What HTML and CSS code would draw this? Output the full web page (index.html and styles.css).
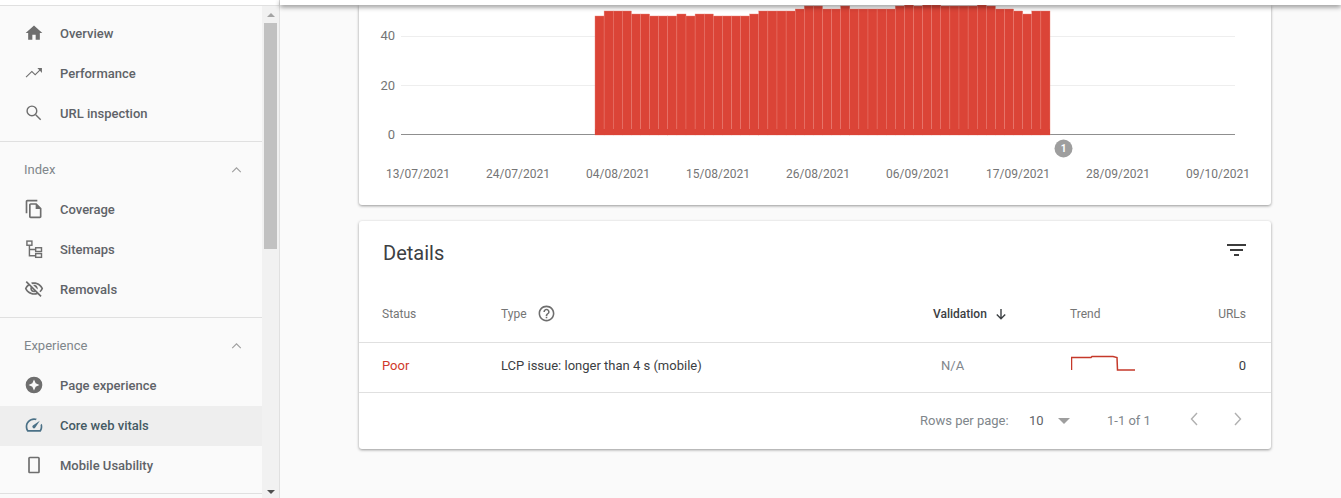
FILE: index.html
```html
<!DOCTYPE html>
<html lang="en">
<head>
    <meta charset="UTF-8">
    <meta name="viewport" content="width=device-width, initial-scale=1.0">
    <title>Core web vitals</title>
    <link rel="stylesheet" href="styles.css">
</head>
<body>
    <aside class="sidebar">
        <div class="sidebar-top"></div>
        <div class="sidebar-body">
            <nav class="nav">
                <div class="nav-group">
                    <a class="nav-item">
                        <svg class="nav-icon" viewBox="0 0 24 24"><path d="M10 20v-6h4v6h5v-8h3L12 3 2 12h3v8z"/></svg>
                        Overview
                    </a>
                    <a class="nav-item">
                        <svg class="nav-icon" viewBox="0 0 24 24"><path d="M16 6l2.29 2.29-4.88 4.88-4-4L2 16.59 2.9 17.5l6.51-6.5 4 4 5.79-5.8L21.5 12V6z"/></svg>
                        Performance
                    </a>
                    <a class="nav-item">
                        <svg class="nav-icon line-icon" viewBox="0 0 24 24"><circle cx="9.5" cy="9.5" r="5.8"/><path d="M14 14l6 6"/></svg>
                        URL inspection
                    </a>
                </div>
                <div class="nav-group">
                    <div class="nav-heading">
                        Index
                        <svg class="nav-chevron" viewBox="0 0 12 7"><path d="M1 6l5-5 5 5"/></svg>
                    </div>
                    <a class="nav-item">
                        <svg class="nav-icon" viewBox="0 0 24 24"><path d="M16 1H4c-1.1 0-2 .9-2 2v14h2V3h12V1zm-1 4H8c-1.1 0-1.99.9-1.99 2L6 21c0 1.1.89 2 1.99 2H19c1.1 0 2-.9 2-2V11l-6-6zM8 21V7h6v5h5v9H8z"/></svg>
                        Coverage
                    </a>
                    <a class="nav-item">
                        <svg class="nav-icon line-icon" viewBox="0 0 24 24"><rect x="3.5" y="2.5" width="6" height="5"/><rect x="14" y="10.5" width="7" height="4.5"/><rect x="14" y="17.5" width="7" height="4.5"/><path d="M6.5 7.5V20H14M6.5 12.5H14"/></svg>
                        Sitemaps
                    </a>
                    <a class="nav-item">
                        <svg class="nav-icon" viewBox="0 0 24 24"><path d="M12 6c3.79 0 7.17 2.13 8.82 5.5-.59 1.22-1.42 2.27-2.41 3.12l1.41 1.41c1.39-1.23 2.49-2.77 3.18-4.53C21.27 7.11 17 4 12 4c-1.27 0-2.49.2-3.64.57l1.65 1.65C10.66 6.09 11.32 6 12 6zm-1.07 1.14L13 9.21c.57.25 1.03.71 1.28 1.28l2.07 2.07c.08-.34.14-.7.14-1.07C16.5 9.01 14.48 7 12 7c-.37 0-.72.05-1.07.14zM2.01 3.87l2.68 2.68C3.06 7.83 1.77 9.53 1 11.5 2.73 15.89 7 19 12 19c1.52 0 2.98-.29 4.32-.82l3.42 3.42 1.41-1.41L3.42 2.45 2.01 3.87zm7.5 7.5l2.61 2.61c-.04.01-.08.02-.12.02-1.38 0-2.5-1.12-2.5-2.5 0-.05.01-.08.01-.13zm-3.4-3.4l1.75 1.75c-.23.55-.36 1.15-.36 1.78 0 2.48 2.02 4.5 4.5 4.5.63 0 1.23-.13 1.77-.36l.98.98c-.88.24-1.8.38-2.75.38-3.79 0-7.17-2.13-8.82-5.5.7-1.43 1.72-2.61 2.93-3.53z"/></svg>
                        Removals
                    </a>
                </div>
                <div class="nav-group">
                    <div class="nav-heading">
                        Experience
                        <svg class="nav-chevron" viewBox="0 0 12 7"><path d="M1 6l5-5 5 5"/></svg>
                    </div>
                    <a class="nav-item">
                        <svg class="nav-icon" viewBox="0 0 24 24"><path fill-rule="evenodd" d="M12 2a10 10 0 1 0 0 20 10 10 0 0 0 0-20zm0 3.5l2 4.5 4.5 2-4.500 2-2 4.500-2-4.500-4.500-2 4.500-2z"/></svg>
                        Page experience
                    </a>
                    <a class="nav-item active">
                        <svg class="nav-icon" viewBox="0 0 24 24"><path d="M12 4C6.500 4 2 8.500 2 14c0 2 .6 3.900 1.600 5.500l.3.5h16.200l.3-.5c1-1.600 1.600-3.500 1.600-5.500 0-1.200-.2-2.400-.6-3.500l-1.600 1.600c.2.600.2 1.200.2 1.900 0 1.400-.4 2.800-1.100 4H5.100C4.400 16.800 4 15.400 4 14c0-4.400 3.600-8 8-8 .7 0 1.300.1 1.900.2l1.600-1.600C14.400 4.200 13.200 4 12 4zM10.600 15.400a2 2 0 0 0 2.800 0L19 7l-8.400 5.600a2 2 0 0 0 0 2.800z"/></svg>
                        Core web vitals
                    </a>
                    <a class="nav-item">
                        <svg class="nav-icon" viewBox="0 0 24 24"><path fill-rule="evenodd" d="M7 2h10c1.100 0 2 .9 2 2v16c0 1.100-.9 2-2 2H7c-1.100 0-2-.9-2-2V4c0-1.100.9-2 2-2zm0 2v16h10V4z"/></svg>
                        Mobile Usability
                    </a>
                </div>
            </nav>
            <div class="scrollbar">
                <span class="scroll-arrow up"></span>
                <span class="scroll-thumb"></span>
                <span class="scroll-arrow down"></span>
            </div>
        </div>
    </aside>

    <div class="page">
        <div class="topbar"></div>
        <main class="content">
            <section class="card chart-card">
                <svg class="chart" width="912" height="200" viewBox="0 0 912 200">
                    <path class="grid-line" d="M42 31.5H876M42 80.5H876"/>
                    <path class="axis-line" d="M42 129.5H876"/>
                    <text class="axis-label" x="36" y="35" text-anchor="end">40</text>
                    <text class="axis-label" x="36" y="85" text-anchor="end">20</text>
                    <text class="axis-label" x="36" y="134" text-anchor="end">0</text>

                    <g class="bars">
                        <rect x="236" y="11" width="9.1" height="119"/>
                        <rect x="245.1" y="6" width="9.1" height="124"/>
                        <rect x="254.2" y="6" width="9.1" height="124"/>
                        <rect x="263.3" y="6" width="9.1" height="124"/>
                        <rect x="272.4" y="9" width="9.1" height="121"/>
                        <rect x="281.5" y="9" width="9.1" height="121"/>
                        <rect x="290.6" y="11" width="9.1" height="119"/>
                        <rect x="299.7" y="11" width="9.1" height="119"/>
                        <rect x="308.8" y="11" width="9.1" height="119"/>
                        <rect x="317.9" y="9" width="9.1" height="121"/>
                        <rect x="327" y="11" width="9.1" height="119"/>
                        <rect x="336.1" y="9" width="9.1" height="121"/>
                        <rect x="345.2" y="9" width="9.1" height="121"/>
                        <rect x="354.3" y="11" width="9.1" height="119"/>
                        <rect x="363.4" y="11" width="9.1" height="119"/>
                        <rect x="372.5" y="11" width="9.1" height="119"/>
                        <rect x="381.6" y="11" width="9.1" height="119"/>
                        <rect x="390.7" y="9" width="9.1" height="121"/>
                        <rect x="399.8" y="6" width="9.1" height="124"/>
                        <rect x="408.9" y="6" width="9.1" height="124"/>
                        <rect x="418" y="6" width="9.1" height="124"/>
                        <rect x="427.1" y="6" width="9.1" height="124"/>
                        <rect x="436.2" y="4" width="9.1" height="126"/>
                        <rect x="445.3" y="1" width="9.1" height="129"/>
                        <rect x="454.4" y="1" width="9.1" height="129"/>
                        <rect x="463.5" y="4" width="9.1" height="126"/>
                        <rect x="472.6" y="4" width="9.1" height="126"/>
                        <rect x="481.7" y="1" width="9.1" height="129"/>
                        <rect x="490.8" y="4" width="9.1" height="126"/>
                        <rect x="499.9" y="4" width="9.1" height="126"/>
                        <rect x="509" y="4" width="9.1" height="126"/>
                        <rect x="518.1" y="4" width="9.1" height="126"/>
                        <rect x="527.2" y="4" width="9.1" height="126"/>
                        <rect x="536.3" y="1" width="9.1" height="129"/>
                        <rect x="545.4" y="0" width="9.1" height="130"/>
                        <rect x="554.5" y="1" width="9.1" height="129"/>
                        <rect x="563.6" y="0" width="9.1" height="130"/>
                        <rect x="572.7" y="0" width="9.1" height="130"/>
                        <rect x="581.8" y="1" width="9.1" height="129"/>
                        <rect x="590.9" y="1" width="9.1" height="129"/>
                        <rect x="600" y="1" width="9.1" height="129"/>
                        <rect x="609.1" y="1" width="9.1" height="129"/>
                        <rect x="618.2" y="0" width="9.1" height="130"/>
                        <rect x="627.3" y="1" width="9.1" height="129"/>
                        <rect x="636.4" y="4" width="9.1" height="126"/>
                        <rect x="645.5" y="4" width="9.1" height="126"/>
                        <rect x="654.6" y="6" width="9.1" height="124"/>
                        <rect x="663.7" y="9" width="9.1" height="121"/>
                        <rect x="672.8" y="6" width="9.1" height="124"/>
                        <rect x="681.9" y="6" width="9.1" height="124"/>
                    </g>
                    <rect class="bars-base" x="236" y="124" width="455" height="6"/>

                    <circle class="badge" cx="704.5" cy="143.5" r="9"/>
                    <text class="badge-text" x="704.5" y="147" text-anchor="middle">1</text>

                    <g class="date-labels" text-anchor="middle">
                        <text x="59" y="173">13/07/2021</text>
                        <text x="159" y="173">24/07/2021</text>
                        <text x="259" y="173">04/08/2021</text>
                        <text x="359" y="173">15/08/2021</text>
                        <text x="459" y="173">26/08/2021</text>
                        <text x="559" y="173">06/09/2021</text>
                        <text x="659" y="173">17/09/2021</text>
                        <text x="759" y="173">28/09/2021</text>
                        <text x="859" y="173">09/10/2021</text>
                    </g>
                </svg>
            </section>

            <section class="card details-card">
                <div class="details-header">
                    <h2 class="details-title">Details</h2>
                    <svg class="filter-icon" viewBox="0 0 19 12"><path d="M0 0h19v2H0zM3 5h13v2H3zM7 10h5v2H7z"/></svg>
                </div>
                <table class="details-table">
                    <thead>
                        <tr>
                            <th class="col-status">Status</th>
                            <th class="col-type">
                                <span class="th-inner">
                                    Type
                                    <svg class="help-icon" viewBox="0 0 24 24"><path d="M11 18h2v-2h-2v2zm1-16C6.48 2 2 6.48 2 12s4.48 10 10 10 10-4.48 10-10S17.52 2 12 2zm0 18c-4.41 0-8-3.59-8-8s3.59-8 8-8 8 3.59 8 8-3.59 8-8 8zm0-14c-2.21 0-4 1.79-4 4h2c0-1.1.9-2 2-2s2 .9 2 2c0 2-3 1.75-3 5h2c0-2.25 3-2.5 3-5 0-2.21-1.79-4-4-4z"/></svg>
                                </span>
                            </th>
                            <th class="col-validation sorted">
                                <span class="th-inner">
                                    Validation
                                    <svg class="sort-icon" viewBox="0 0 12 12"><path d="M6 1v9.5M1.800 6.500L6 10.700l4.200-4.200"/></svg>
                                </span>
                            </th>
                            <th class="col-trend">Trend</th>
                            <th class="col-urls">URLs</th>
                        </tr>
                    </thead>
                    <tbody>
                        <tr>
                            <td class="status-poor">Poor</td>
                            <td>LCP issue: longer than 4 s (mobile)</td>
                            <td class="validation-value">N/A</td>
                            <td>
                                <svg class="sparkline" width="65" height="16" viewBox="0 0 65 16"><path d="M.5 15V2.500H20l1-1h21l4 1 .5 12.500H64"/></svg>
                            </td>
                            <td class="urls-value">0</td>
                        </tr>
                    </tbody>
                </table>
                <div class="pager">
                    <span class="pager-label">Rows per page:</span>
                    <span class="pager-size">10</span>
                    <span class="pager-caret"></span>
                    <span class="pager-range">1-1 of 1</span>
                    <svg class="pager-arrow" viewBox="0 0 8 14"><path d="M7 1L1.500 7 7 13"/></svg>
                    <svg class="pager-arrow" viewBox="0 0 8 14"><path d="M1 1l5.500 6L1 13"/></svg>
                </div>
            </section>
        </main>
    </div>
</body>
</html>
```
FILE: styles.css
```css
* {
    box-sizing: border-box;
}

html, body {
    height: 100%;
}

body {
    font-family: Roboto, "Liberation Sans", sans-serif;
    margin: 0;
    padding: 0;
    background-color: #fafafa;
    display: flex;
    overflow: hidden;
    color: #3c4043;
}

/* Sidebar */

.sidebar {
    width: 280px;
    flex-shrink: 0;
    border-right: 1px solid #e0e0e0;
    background-color: #fafafa;
    display: flex;
    flex-direction: column;
    overflow: hidden;
}

.sidebar-top {
    height: 6px;
    flex-shrink: 0;
    background-color: #fff;
    border-bottom: 1px solid #e0e0e0;
}

.sidebar-body {
    display: flex;
    flex: 1;
    min-height: 0;
}

.nav {
    width: 262px;
    flex-shrink: 0;
}

.nav-group {
    padding-bottom: 7px;
    border-bottom: 1px solid #e0e0e0;
}

.nav-group:first-child {
    padding-top: 8px;
}

.nav-heading {
    height: 48px;
    padding: 7px 20px 0 24px;
    display: flex;
    align-items: center;
    justify-content: space-between;
    font-size: 13px;
    color: #80868b;
}

.nav-chevron {
    width: 11px;
    height: 6px;
    fill: none;
    stroke: #9e9e9e;
    stroke-width: 1.3;
}

.nav-item {
    height: 40px;
    padding: 0 0 2px 24px;
    display: flex;
    align-items: center;
    font-size: 13px;
    font-weight: 500;
    color: #5f6368;
}

.nav-item.active {
    background-color: #eeeeee;
    color: #455a64;
}

.nav-icon {
    width: 20px;
    height: 20px;
    margin-right: 16px;
    fill: #6e6e6e;
}

.nav-item.active .nav-icon {
    fill: #4b7187;
}

.line-icon {
    fill: none;
    stroke: #6e6e6e;
    stroke-width: 1.7;
}

.scrollbar {
    width: 17px;
    flex-shrink: 0;
    background-color: #f1f1f1;
    display: flex;
    flex-direction: column;
    align-items: center;
}

.scroll-thumb {
    width: 13px;
    height: 226px;
    background-color: #c1c1c1;
}

.scroll-arrow {
    width: 0;
    height: 0;
    border-left: 4px solid transparent;
    border-right: 4px solid transparent;
}

.scroll-arrow.up {
    margin: 7px 0 6px;
    border-bottom: 4px solid #a3a3a3;
}

.scroll-arrow.down {
    margin-top: auto;
    margin-bottom: 4px;
    border-top: 4px solid #505050;
}

/* Main area */

.page {
    flex: 1;
    min-width: 0;
    display: flex;
    flex-direction: column;
}

.topbar {
    height: 5px;
    flex-shrink: 0;
    background-color: #fff;
    box-shadow: 0 2px 5px rgba(0, 0, 0, 0.45);
    position: relative;
    z-index: 1;
}

.content {
    padding-left: 79px;
}

.card {
    width: 912px;
    background-color: #fff;
    border-radius: 0 0 3px 3px;
    box-shadow: 0 1px 3px rgba(0, 0, 0, 0.4);
}

.chart-card {
    height: 200px;
}

.chart {
    display: block;
}

.grid-line {
    stroke: #eeeeee;
    fill: none;
}

.axis-line {
    stroke: #8f8f8f;
    fill: none;
}

.axis-label {
    font-size: 13px;
    fill: #757575;
}

.date-labels {
    font-size: 12px;
    fill: #757575;
}

.bars rect {
    fill: #db4437;
    stroke: #ea8076;
    stroke-width: 0.4;
}

.bars-base {
    fill: #db4437;
}

.badge {
    fill: #9e9e9e;
}

.badge-text {
    font-size: 10px;
    font-weight: 700;
    fill: #fff;
}

.details-card {
    margin-top: 16px;
    border-radius: 3px;
}

.details-header {
    height: 64px;
    padding: 21px 25px 0 24px;
    display: flex;
    justify-content: space-between;
}

.details-title {
    margin: 0;
    font-size: 20px;
    line-height: 23px;
    font-weight: 400;
    color: #3c4043;
}

.filter-icon {
    width: 19px;
    height: 12px;
    margin-top: 2px;
    fill: #3c3c3c;
}

.details-table {
    width: 100%;
    border-collapse: collapse;
    table-layout: fixed;
}

.details-table th {
    height: 57px;
    padding: 1px 0 0;
    font-size: 12px;
    font-weight: 400;
    text-align: left;
    color: #757575;
    border-bottom: 1px solid #e0e0e0;
}

.details-table td {
    height: 50px;
    padding: 0 0 4px;
    font-size: 13px;
    color: #3c4043;
    border-bottom: 1px solid #e0e0e0;
}

.details-table .col-status {
    width: 142px;
    padding-left: 23px;
}

.details-table td:first-child {
    padding-left: 23px;
}

.col-type {
    width: 432px;
}

.col-validation {
    width: 137px;
}

.details-table .col-urls,
.details-table .urls-value {
    text-align: right;
    padding-right: 25px;
}

.th-inner {
    display: flex;
    align-items: center;
}

.details-table .sorted {
    font-weight: 500;
    color: #3c4043;
}

.help-icon {
    width: 19px;
    height: 19px;
    margin-left: 10px;
    fill: #6e6e6e;
}

.sort-icon {
    width: 12px;
    height: 12px;
    margin-left: 8px;
    fill: none;
    stroke: #3c4043;
    stroke-width: 1.4;
}

.details-table .status-poor {
    color: #d0392b;
}

.details-table .validation-value {
    padding-left: 8px;
    color: #80868b;
}

.sparkline {
    display: block;
    margin: 0 0 4px 1px;
    fill: none;
    stroke: #c5392a;
    stroke-width: 1.5;
}

.pager {
    height: 56px;
    padding-left: 561px;
    display: flex;
    align-items: center;
    font-size: 13px;
    color: #80868b;
}

.pager > * {
    flex-shrink: 0;
}

.pager-label {
    width: 109px;
}

.pager-size {
    width: 29px;
    color: #5f6368;
}

.pager-caret {
    width: 0;
    height: 0;
    margin-right: 37px;
    border-left: 6px solid transparent;
    border-right: 6px solid transparent;
    border-top: 6px solid #9e9e9e;
}

.pager-range {
    width: 83px;
}

.pager-arrow {
    width: 8px;
    height: 14px;
    margin: 0 36px 4px 0;
    fill: none;
    stroke: #b0b0b0;
    stroke-width: 1.4;
}

.pager-arrow:last-child {
    margin-right: 0;
}
```
